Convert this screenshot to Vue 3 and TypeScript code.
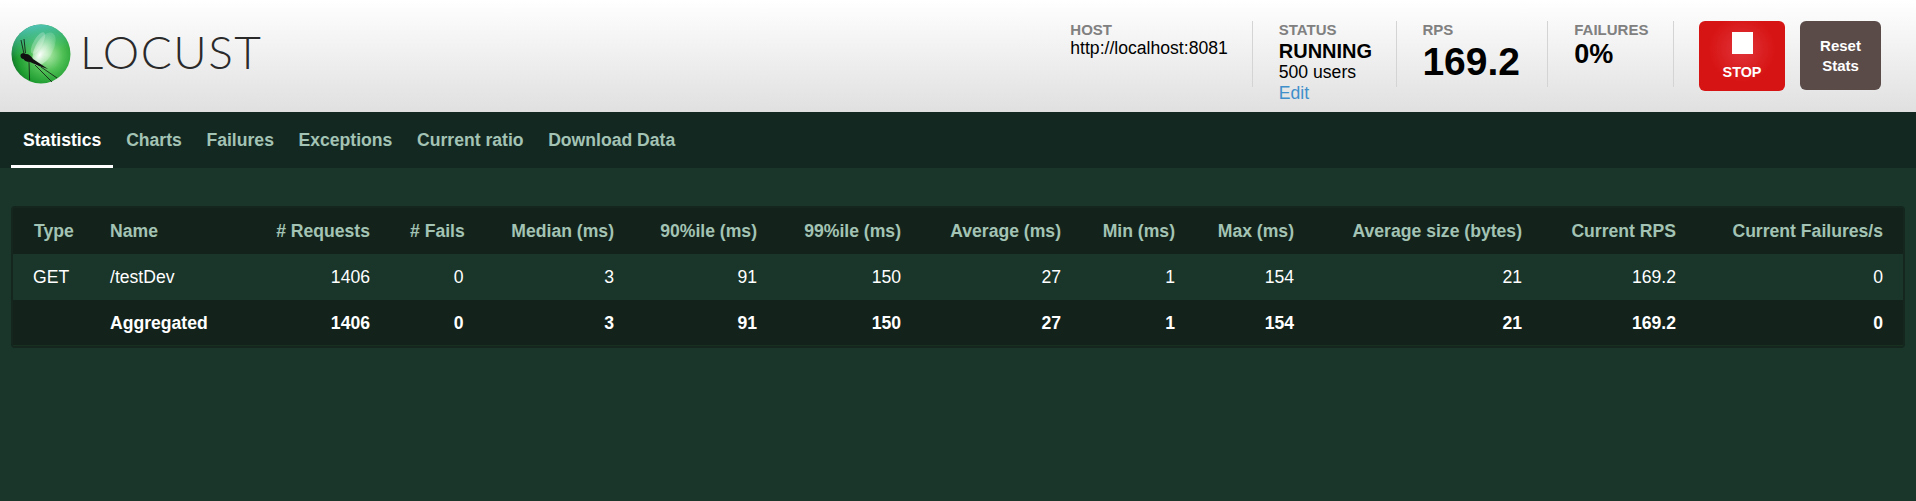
<script setup lang="ts">
interface Row { type: string; name: string; values: string[]; total?: boolean }

const tabs: string[] = ['Statistics', 'Charts', 'Failures', 'Exceptions', 'Current ratio', 'Download Data']
const columns: string[] = ['# Requests', '# Fails', 'Median (ms)', '90%ile (ms)', '99%ile (ms)', 'Average (ms)', 'Min (ms)', 'Max (ms)', 'Average size (bytes)', 'Current RPS', 'Current Failures/s']
const values: string[] = ['1406', '0', '3', '91', '150', '27', '1', '154', '21', '169.2', '0']
const rows: Row[] = [
  { type: 'GET', name: '/testDev', values },
  { type: '', name: 'Aggregated', values, total: true },
]
</script>

<template>
  <div class="page">
    <header class="top">
      <div class="brand">
        <svg class="mark" viewBox="0 0 60 60" width="60" height="60" aria-hidden="true">
          <defs>
            <radialGradient id="ball" cx="60%" cy="52%" r="60%">
              <stop offset="0" stop-color="#b5ecb0" />
              <stop offset="0.45" stop-color="#4fc055" />
              <stop offset="0.85" stop-color="#1c9a2e" />
              <stop offset="1" stop-color="#14782a" />
            </radialGradient>
            <linearGradient id="tint" x1="0.35" y1="0" x2="0.45" y2="0.5">
              <stop offset="0" stop-color="#52c4bd" stop-opacity="1" />
              <stop offset="1" stop-color="#4cc7a0" stop-opacity="0" />
            </linearGradient>
            <radialGradient id="shine" cx="45%" cy="70%" r="65%">
              <stop offset="0" stop-color="#ffffff" stop-opacity="0.98" />
              <stop offset="0.55" stop-color="#e4f8e6" stop-opacity="0.55" />
              <stop offset="1" stop-color="#c8f0d8" stop-opacity="0.22" />
            </radialGradient>
          </defs>
          <circle cx="30" cy="30" r="29.5" fill="url(#ball)" />
          <circle cx="30" cy="30" r="29.5" fill="url(#tint)" />
          <ellipse cx="33" cy="25" rx="9" ry="18" transform="rotate(28 33 25)" fill="url(#shine)" />
          <ellipse cx="27" cy="19" rx="4.5" ry="12" transform="rotate(30 27 19)" fill="#ffffff" fill-opacity="0.25" />
          <path d="M9.5 31 C10 29 13 28.5 15 30 C18 30 20 32 22 35 L37 45 L28 42 L19 38 C15 38 13 36.5 12.5 35 C10.5 35 9.2 33 9.5 31 Z" fill="#111" />
          <path d="M10 16 L13 30 M13 15 L14.5 29 M18 38 L18.6 56 M24 41 L41 58 M30 43 L46 54" stroke="#111" stroke-width="0.8" fill="none" />
        </svg>
        <span class="wordmark">LOCUST</span>
      </div>
      <div class="summary">
        <div class="stat host">
          <span class="label">Host</span>
          <span class="value">http://localhost:8081</span>
        </div>
        <div class="stat status">
          <span class="label">Status</span>
          <strong class="running">RUNNING</strong>
          <span class="value users">500 users</span>
          <a class="edit" href="#">Edit</a>
        </div>
        <div class="stat rate">
          <span class="label">RPS</span>
          <strong class="rps">169.2</strong>
        </div>
        <div class="stat failures">
          <span class="label">Failures</span>
          <strong class="fail">0%</strong>
        </div>
        <div class="actions">
          <button class="btn stop" type="button"><i class="square"></i><span>STOP</span></button>
          <button class="btn reset" type="button">Reset<br />Stats</button>
        </div>
      </div>
    </header>

    <nav class="tabs">
      <a v-for="(tab, i) in tabs" :key="tab" class="tab" :class="{ active: i === 0 }" href="#">{{ tab }}</a>
    </nav>

    <main class="content">
      <div class="card">
        <table class="stats">
          <thead>
            <tr>
              <th class="left">Type</th>
              <th class="left">Name</th>
              <th v-for="c in columns" :key="c">{{ c }}</th>
            </tr>
          </thead>
          <tbody>
            <tr v-for="r in rows" :key="r.name" :class="{ total: r.total }">
              <td class="left">{{ r.type }}</td>
              <td class="left">{{ r.name }}</td>
              <td v-for="(v, i) in r.values" :key="i">{{ v }}</td>
            </tr>
          </tbody>
        </table>
      </div>
    </main>
  </div>
</template>

<style>
html, body { margin: 0; background: #1a352a; }
</style>

<style scoped>
.page {
  min-height: 501px;
  display: flex;
  flex-direction: column;
  background: #1a352a;
  font-family: "Liberation Sans", Arial, sans-serif;
  color: #fff;
}
.top {
  height: 112px;
  box-sizing: border-box;
  display: flex;
  justify-content: space-between;
  padding: 21px 35px 0 11px;
  background: linear-gradient(#ffffff, #e0e0e0);
  color: #000;
}
.brand { display: flex; align-items: flex-start; }
.mark { margin-top: 3px; }
.wordmark {
  margin: 1px 0 0 9px;
  font-family: Lato, sans-serif;
  font-weight: 300;
  font-size: 46px;
  line-height: 60px;
  letter-spacing: 1.5px;
  color: #2a2a2a;
}
.summary { display: flex; align-items: flex-start; }
.stat {
  height: 66px;
  display: flex;
  flex-direction: column;
  align-items: flex-start;
  padding: 0 25px;
  border-right: 1px solid #d4d4d4;
}
.host { padding-right: 23.8px; }
.status { padding: 0 23.8px 0 26.2px; }
.rate { padding: 0 27px 0 25.5px; }
.failures { padding: 0 24.6px 0 26.2px; }
.label {
  font-size: 15px;
  line-height: 16px;
  margin-top: 1px;
  font-weight: 700;
  color: #808080;
  text-transform: uppercase;
}
.value { font-size: 17.6px; line-height: 20px; }
.running { font-size: 20px; line-height: 22px; margin-top: 2px; }
.users { line-height: 23px; margin-top: -1px; }
.edit { font-size: 17.6px; line-height: 18px; color: #3f8fcb; text-decoration: none; }
.rps { font-size: 39px; line-height: 46px; margin-top: 1px; }
.fail { font-size: 27px; line-height: 32px; }
.actions { display: flex; align-items: flex-start; gap: 15px; margin-left: 25px; }
.btn {
  border: 0;
  border-radius: 6px;
  color: #fff;
  font-family: inherit;
  font-weight: 700;
  padding: 0;
}
.stop {
  width: 86px;
  height: 70px;
  display: flex;
  flex-direction: column;
  align-items: center;
  background: radial-gradient(circle at 50% 40%, #e0343a 0, #d71414 55%);
  font-size: 14.4px;
}
.square { width: 21px; height: 22px; margin-top: 11px; background: #fff; }
.stop span { margin-top: 10px; line-height: 17px; }
.reset {
  width: 81px;
  height: 69px;
  background: #5a4b49;
  font-size: 15px;
  line-height: 20px;
}
.tabs {
  height: 56px;
  box-sizing: border-box;
  display: flex;
  padding-left: 11px;
  background: #142822;
}
.tab {
  box-sizing: border-box;
  height: 56px;
  padding: 0 12.3px;
  font-size: 17.6px;
  font-weight: 700;
  line-height: 56px;
  color: #a3c3b4;
  text-decoration: none;
}
.tab.active { color: #fff; border-bottom: 3px solid #fff; padding: 0 12px; margin-right: 0.6px; }
.content { padding: 38px 11px 0 11px; }
.card {
  border: 2px solid #14261d;
  border-radius: 4px;
  background: #13231b;
}
.stats {
  width: 100%;
  table-layout: fixed;
  border-collapse: collapse;
  font-size: 17.6px;
}
th, td {
  padding: 0 20px;
  text-align: right;
  white-space: nowrap;
  overflow: visible;
}
th { height: 46px; font-weight: 700; color: #a3c3b4; }
td { height: 46px; }
th.left, td.left { text-align: left; }
tbody tr { background: #1a352a; }
tbody tr.total { background: #13231b; font-weight: 700; box-shadow: inset 0 -1px 0 #18301f; }
th:nth-child(1) { width: 36px; padding-left: 21px; }
th:nth-child(2) { width: 110px; }
th:nth-child(3) { width: 110px; }
th:nth-child(4) { width: 53.5px; }
th:nth-child(5) { width: 110.5px; }
th:nth-child(6) { width: 103px; }
th:nth-child(7) { width: 104px; }
th:nth-child(8) { width: 120px; }
th:nth-child(9) { width: 74px; }
th:nth-child(10) { width: 79px; }
th:nth-child(11) { width: 188px; }
th:nth-child(12) { width: 114px; }
</style>
